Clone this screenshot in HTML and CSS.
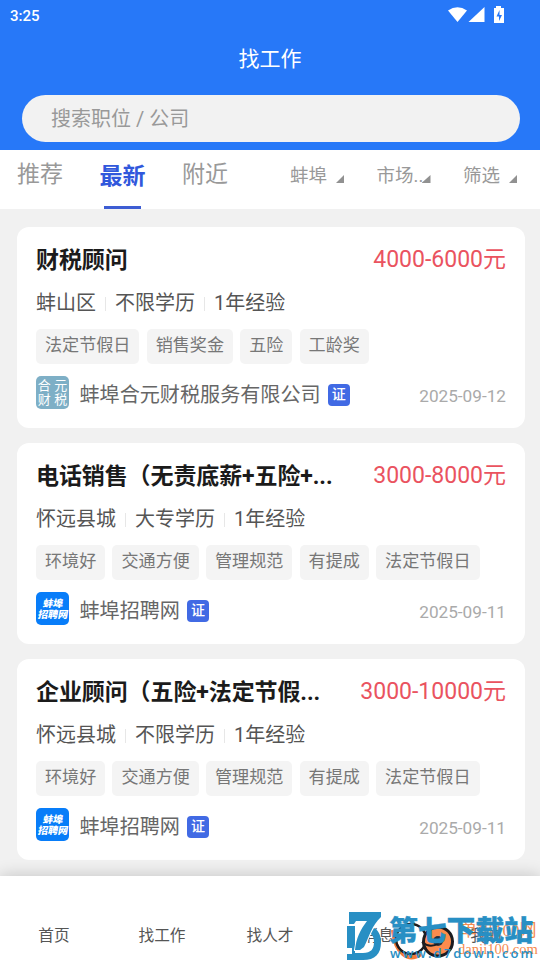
FILE: index.html
```html
<!DOCTYPE html>
<html lang="zh-CN">
<head>
<meta charset="utf-8">
<title>找工作</title>
<link rel="stylesheet" href="styles.css">
</head>
<body>
<div class="app">
  <header class="header">
    <div class="status"><span>3:25</span>
      <svg class="status-icons" width="58" height="18" viewBox="0 0 58 18" fill="#fff"><path d="M0 4.500Q9.500 -2 19 4.500L9.500 16Z"/><path d="M36.500 1V16H20.500Z"/><path d="M46 2h2V0h5v2h3v15H46Z"/><path d="M51.500 4L48.500 10.500h2.500V15l3-6h-2.500Z" fill="#2778f8"/></svg>
    </div>
    <h1>找工作</h1>
    <div class="search">搜索职位 / 公司</div>
  </header>
  <nav class="filters">
    <div class="tabs"><span>推荐</span><span class="active">最新</span><span>附近</span></div>
    <div class="selects"><span class="select">蚌埠<i></i></span><span class="select">市场<b class="dots">..</b><i></i></span><span class="select">筛选<i></i></span></div>
  </nav>
  <main class="jobs">
    <article class="card">
      <div class="top"><h2>财税顾问</h2><strong class="pay">4000-6000元</strong></div>
      <div class="meta"><span>蚌山区</span><span>不限学历</span><span>1年经验</span></div>
      <div class="tags"><span>法定节假日</span><span>销售奖金</span><span>五险</span><span>工龄奖</span></div>
      <div class="company"><div class="logo teal"><span>合</span><span>元</span><span>财</span><span>税</span></div><span class="name">蚌埠合元财税服务有限公司</span><span class="cert">证</span><time>2025-09-12</time></div>
    </article>
    <article class="card">
      <div class="top"><h2>电话销售（无责底薪+五险+...</h2><strong class="pay">3000-8000元</strong></div>
      <div class="meta"><span>怀远县城</span><span>大专学历</span><span>1年经验</span></div>
      <div class="tags"><span>环境好</span><span>交通方便</span><span>管理规范</span><span>有提成</span><span>法定节假日</span></div>
      <div class="company"><div class="logo blue"><span>蚌埠</span><span>招聘网</span></div><span class="name">蚌埠招聘网</span><span class="cert">证</span><time>2025-09-11</time></div>
    </article>
    <article class="card">
      <div class="top"><h2>企业顾问（五险+法定节假...</h2><strong class="pay">3000-10000元</strong></div>
      <div class="meta"><span>怀远县城</span><span>不限学历</span><span>1年经验</span></div>
      <div class="tags"><span>环境好</span><span>交通方便</span><span>管理规范</span><span>有提成</span><span>法定节假日</span></div>
      <div class="company"><div class="logo blue"><span>蚌埠</span><span>招聘网</span></div><span class="name">蚌埠招聘网</span><span class="cert">证</span><time>2025-09-11</time></div>
    </article>
  </main>
  <footer class="bottom"><span>首页</span><span>找工作</span><span>找人才</span><span>消息</span><span>我的</span></footer>
  <div class="mark">
    <svg class="mark-art" width="200" height="60" viewBox="0 0 200 60">
      <path d="M53 30C55 53 68 63 81 54" fill="none" stroke="#f47a35" stroke-width="4"/>
      <circle cx="71" cy="39" r="15" fill="none" stroke="#1c1c20" stroke-width="2.500"/>
      <circle cx="98" cy="41.500" r="14.500" fill="#fb8b4d" stroke="#1c1c20" stroke-width="3"/>
      <circle cx="98" cy="41" r="5" fill="#24313f"/>
      <path d="M82 42Q90 49 99 43" fill="none" stroke="#1c1c20" stroke-width="2"/>
    </svg>
    <span class="orange cn">单机100网</span>
    <span class="orange site">danji100.com</span>
    <svg class="mark-art" width="200" height="60" viewBox="0 0 200 60">
      <path d="M7 26H15V53H23C31 53 34 49 34 42C34 37 32 34 29 33L32 27C38 29 41 35 41 42C41 54 35 60 23 60H7V54H12V48H7Z" fill="#288fc4"/>
      <path d="M9 12H41V17C32 25 29 37 24 47L20 50H15C16 39 20 30 27 21H16L14 24H9Z" fill="#288fc4" stroke="#fff" stroke-width="2" paint-order="stroke"/>
    </svg>
    <span class="blue-title">第七下载站</span>
    <span class="blue-site">www.d7down.com</span>
  </div>
</div>
</body>
</html>
```
FILE: styles.css
```css
* { box-sizing: border-box; }
body { margin: 0; font-family: Roboto, "Noto Sans CJK SC", sans-serif; }
.app { position: relative; display: flex; flex-direction: column; width: 540px; height: 960px; overflow: hidden; background: #f1f1f1; }
.header { height: 150px; flex: none; background: #2778f8; color: #fff; }
.status { height: 32px; display: flex; justify-content: space-between; padding: 6px 36px 0 10px; font-size: 15px; line-height: 20px; font-weight: 500; }
.status-icons { margin-right: -2px; }
h1 { margin: 12px 0 0; height: 31px; text-align: center; font-size: 21px; line-height: 31px; font-weight: 400; }
.search { height: 47px; margin: 20px 20px 0 22px; padding-left: 29px; border-radius: 24px; background: #f2f2f2; color: #999; font-size: 20px; line-height: 48px; }
.filters { height: 59px; flex: none; display: flex; background: #fff; color: #999; }
.tabs { width: 290px; padding-left: 17px; display: flex; flex: none; gap: 36.500px; font-size: 23px; line-height: 50px; }
.tabs .active { color: #3158dc; font-weight: 700; line-height: 54px; display: flex; flex-direction: column; align-items: center; }
.active::after { content: ""; width: 37px; height: 3px; margin-top: 2px; background: #3d5dd3; }
.selects { display: flex; font-size: 18.500px; line-height: 52px; }
.select { width: 86.500px; display: flex; align-items: center; height: 52px; flex: none; }
.select i { width: 8px; height: 8px; margin: 6px 0 0 9px; background: #919191; clip-path: polygon(100% 0, 100% 100%, 0 100%); }
.dots { width: 8px; font-weight: 400; }
.dots + i { margin-left: 0; width: 9px; }
.jobs { padding: 18px 15px 0 17px; display: grid; gap: 15px; }
.card { height: 201px; padding: 17px 19px 0; border-radius: 12px; background: #fff; }
.top { height: 32px; display: flex; justify-content: space-between; white-space: nowrap; line-height: 34px; }
h2 { margin: 0; font-size: 23px; letter-spacing: -.1px; font-weight: 700; color: #1b1b1b; }
.pay { font-size: 23px; font-weight: 400; color: #ea535f; line-height: 32px; }
.meta { height: 30px; margin-top: 12px; display: flex; align-items: center; font-size: 20px; line-height: 30px; color: #555; }
.meta span + span::before { content: ""; display: inline-block; width: 1px; height: 14px; margin: 0 9px; background: #e7e7e7; vertical-align: -1px; }
.tags { margin-top: 11px; display: flex; gap: 7.200px; }
.tags span { height: 35px; padding: 0 9px; border-radius: 5px; background: #f4f4f4; color: #777; font-size: 17.100px; line-height: 32px; white-space: nowrap; }
.company { height: 33px; margin-top: 12px; display: flex; align-items: center; }
.logo { width: 33px; height: 33px; flex: none; border-radius: 5px; color: #fff; overflow: hidden; text-align: center; }
.teal { display: grid; grid-template-columns: 1fr 1fr; padding: 3px 0; background: #7eafc6; font-size: 13px; line-height: 14px; }
.blue { display: flex; flex-direction: column; align-items: center; padding-top: 6px; background: #087df9; font-size: 10px; line-height: 11px; font-weight: 900; }
.blue span { transform: skewX(-10deg); white-space: nowrap; }
.name { margin: 4px 0 0 10.500px; font-size: 20.100px; line-height: 30px; color: #666; }
.cert { width: 22px; height: 22px; margin: 4px 0 0 7px; border-radius: 4px; background: #416ae4; color: #fff; font-size: 14px; line-height: 21px; text-align: center; font-weight: 500; }
time { margin: 7px 0 0 auto; font-size: 17.200px; line-height: 24px; color: #aaa; }
.bottom { position: absolute; left: 0; right: 0; bottom: 0; height: 84px; display: grid; grid-template-columns: repeat(5, 1fr); padding-top: 47px; text-align: center; background: #fff; box-shadow: 0 0 16px rgba(0,0,0,.2); color: #555; font-size: 15.700px; line-height: 26px; }
.mark { position: absolute; left: 340px; top: 900px; width: 200px; height: 60px; white-space: nowrap; }
.mark > * { position: absolute; }
.mark-art { left: 0; top: 0; }
.orange { color: #f58b50; font-family: "Liberation Serif", "Noto Sans CJK SC", serif; }
.cn { left: 120px; top: 20px; font-size: 17px; line-height: 22px; }
.site { left: 118px; top: 39px; font-size: 14.600px; line-height: 20px; }
.blue-title { left: 49px; top: 12px; font-size: 28.800px; line-height: 38px; font-weight: 900; color: #288fc4; -webkit-text-stroke: .3px #288fc4; }
.blue-site { left: 50px; top: 45px; font-family: "Open Sans", sans-serif; font-size: 13px; line-height: 16px; letter-spacing: 2.050px; font-weight: 600; color: #288fc4; }
```
